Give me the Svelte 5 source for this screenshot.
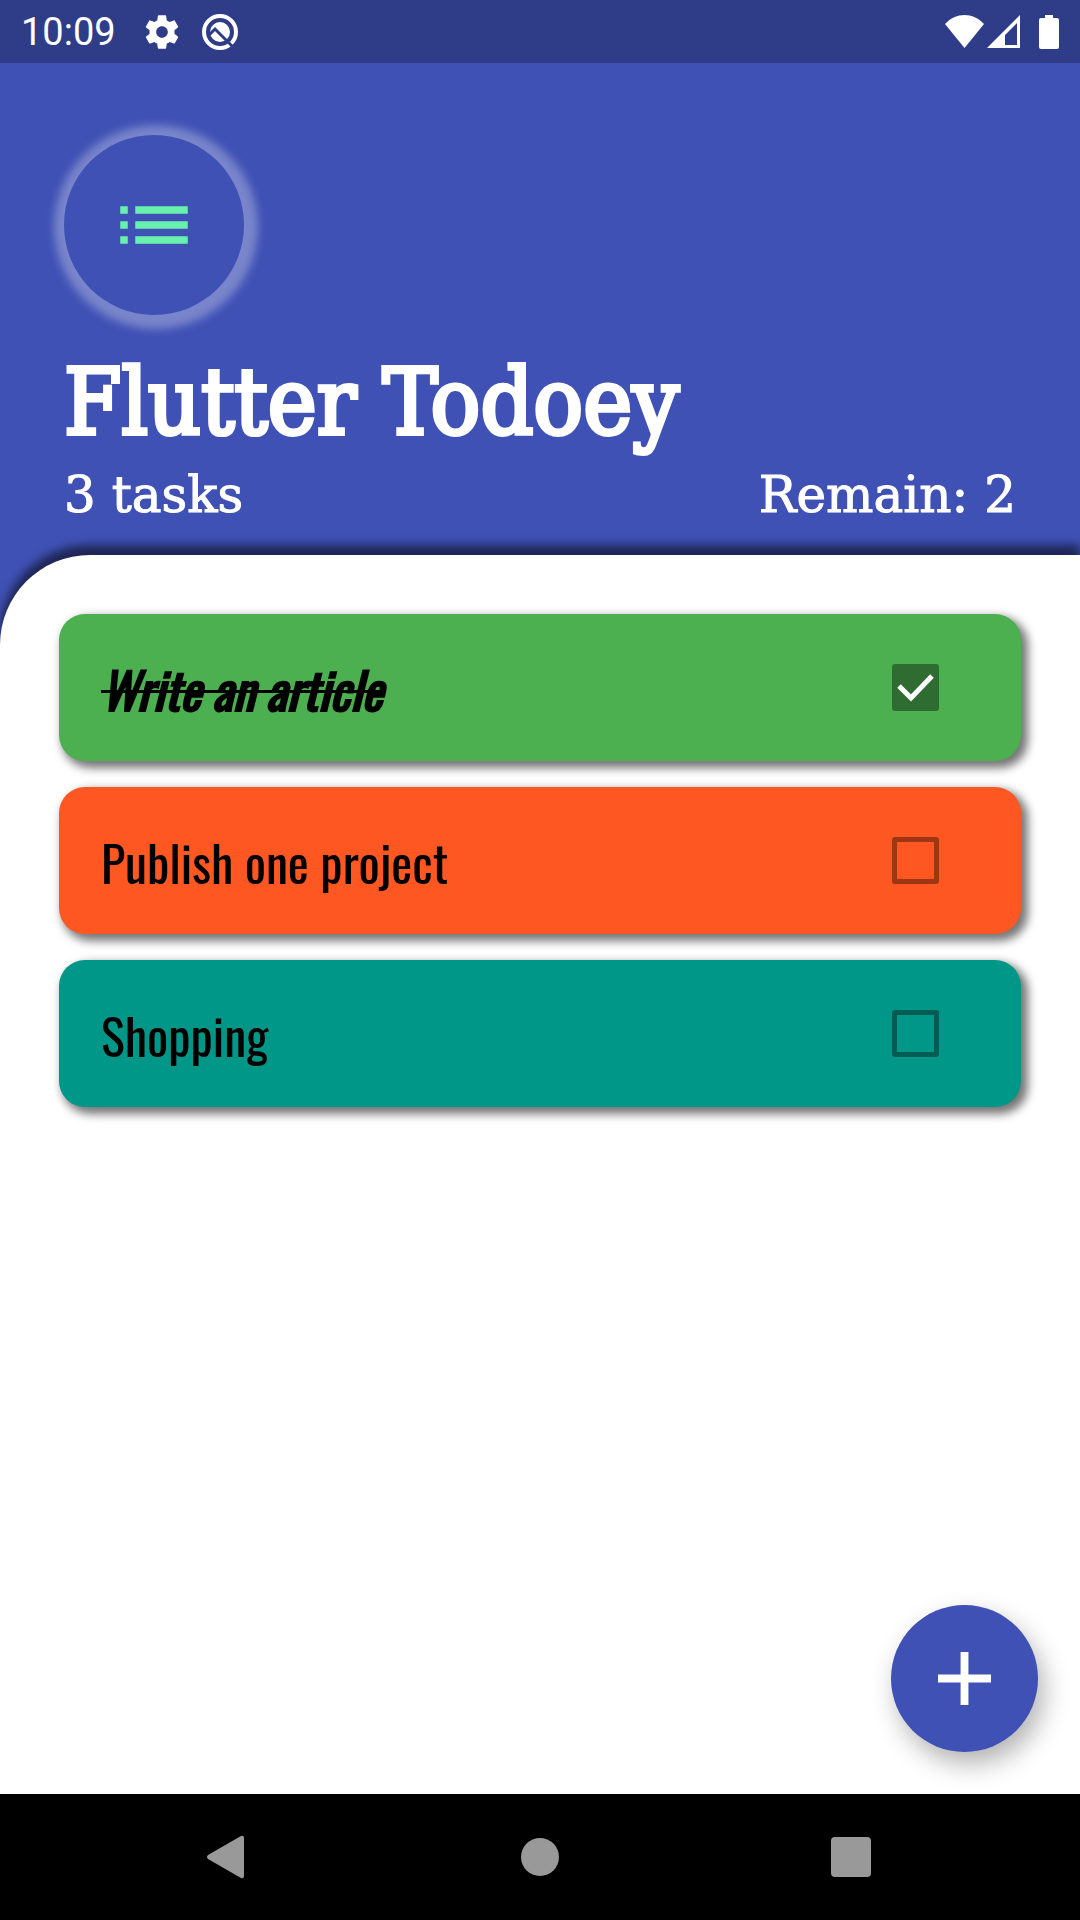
<script>
  let tasks = $state([
    { name: 'Write an article', tone: 'green', done: true },
    { name: 'Publish one project', tone: 'orange', done: false },
    { name: 'Shopping', tone: 'teal', done: false },
  ]);
  let remaining = $derived(tasks.filter((t) => !t.done).length);
</script>

<div class="screen">
  <div class="status">
    <div class="status-group left">
      <span class="time">10:09</span>
      <svg class="gear" viewBox="0 0 24 24" aria-hidden="true">
        <path d="M19.43 12.98c.04-.32.07-.64.07-.98s-.03-.66-.07-.98l2.11-1.65c.19-.15.24-.42.12-.64l-2-3.46c-.12-.22-.39-.3-.61-.22l-2.49 1c-.52-.4-1.08-.73-1.69-.98l-.38-2.65C14.46 2.18 14.25 2 14 2h-4c-.25 0-.46.18-.49.42l-.38 2.65c-.61.25-1.17.59-1.69.98l-2.49-1c-.23-.09-.49 0-.61.22l-2 3.46c-.13.22-.07.49.12.64l2.11 1.65c-.04.32-.07.65-.07.98s.03.66.07.98l-2.11 1.65c-.19.15-.24.42-.12.64l2 3.46c.12.22.39.3.61.22l2.49-1c.52.4 1.08.73 1.69.98l.38 2.65c.03.24.24.42.49.42h4c.25 0 .46-.18.49-.42l.38-2.65c.61-.25 1.17-.59 1.69-.98l2.49 1c.23.09.49 0 .61-.22l2-3.46c.12-.22.07-.49-.12-.64l-2.11-1.65zM12 15.5c-1.93 0-3.5-1.57-3.5-3.5s1.57-3.5 3.5-3.5 3.5 1.57 3.5 3.5-1.57 3.5-3.5 3.5z" />
      </svg>
      <svg class="badge" viewBox="0 0 36 36" aria-hidden="true">
        <circle class="ring" cx="18" cy="18" r="16" />
        <circle cx="18" cy="18" r="10" />
        <path class="cut" d="M7 21l6-6 17 17" />
      </svg>
    </div>
    <div class="status-group right">
      <svg class="wifi" viewBox="0 0 39 33" aria-hidden="true">
        <path d="M0 9C11-3 28-3 39 9L19.500 33z" />
      </svg>
      <svg class="signal" viewBox="0 0 33 33" aria-hidden="true">
        <path fill-rule="evenodd" d="M33 0v33H0zM30 8L18 20v10h12z" />
      </svg>
      <svg class="battery" viewBox="0 0 20 34" aria-hidden="true">
        <path d="M6 0h8v3h4q2 0 2 2v27q0 2-2 2H2q-2 0-2-2V5q0-2 2-2h4z" />
      </svg>
    </div>
  </div>

  <header>
    <div class="logo">
      <svg viewBox="0 0 24 24" aria-hidden="true">
        <path d="M3 13h2v-2H3v2zm0 4h2v-2H3v2zm0-8h2V7H3v2zm4 4h14v-2H7v2zm0 4h14v-2H7v2zM7 7v2h14V7H7z" />
      </svg>
    </div>
    <h1>Flutter Todoey</h1>
    <div class="summary">
      <span>{tasks.length} tasks</span>
      <span>Remain: {remaining}</span>
    </div>
  </header>

  <main>
    <ul>
      {#each tasks as task}
        <li>
          <label class="card {task.tone}" class:done={task.done}>
            <span class="name">{task.name}</span>
            <span class="box">
              <input type="checkbox" bind:checked={task.done} />
              <svg class="tick" viewBox="0 0 47 47" aria-hidden="true">
                <path d="M7 22l12 12 21-22" />
              </svg>
            </span>
          </label>
        </li>
      {/each}
    </ul>
    <button class="add" aria-label="Add task">
      <svg viewBox="0 0 54 54" aria-hidden="true"><path d="M23 0h8v23h23v8H31v23h-8V31H0v-8h23z" /></svg>
    </button>
  </main>

  <nav>
    <button aria-label="Back">
      <svg viewBox="0 0 44 44" aria-hidden="true"><path d="M34 1q3-1 3 2v38q0 3-3 2L1 24q-2-2 0-4z" /></svg>
    </button>
    <button aria-label="Home">
      <svg viewBox="0 0 44 44" aria-hidden="true"><circle cx="22" cy="22" r="19" /></svg>
    </button>
    <button aria-label="Recents">
      <svg viewBox="0 0 44 44" aria-hidden="true"><rect x="2" y="2" width="40" height="40" rx="4" /></svg>
    </button>
  </nav>
</div>

<style>
  :global(body) {
    margin: 0;
  }

  .screen {
    display: flex;
    flex-direction: column;
    min-height: 100vh;
    overflow: hidden;
    background: #3f51b5;
    color: #fff;
    font-family: Roboto, sans-serif;
  }

  svg {
    display: block;
    fill: currentColor;
  }

  button {
    display: grid;
    place-items: center;
    padding: 0;
    border: 0;
    background: none;
    color: inherit;
    cursor: pointer;
  }

  .status {
    display: flex;
    justify-content: space-between;
    align-items: center;
    height: 63px;
    padding: 0 21px;
    background: #2f3c87;
  }

  .status-group {
    display: flex;
    align-items: center;
  }

  .time {
    margin-right: 26px;
    font-size: 38px;
    line-height: 44px;
  }

  .gear {
    width: 40px;
    margin-right: 20px;
  }

  .badge {
    width: 36px;
  }

  .badge .ring {
    fill: none;
    stroke: #fff;
    stroke-width: 4;
  }

  .badge .cut {
    fill: none;
    stroke: #2f3c87;
    stroke-width: 3;
  }

  .wifi {
    width: 39px;
    margin-right: 3px;
  }

  .signal {
    width: 33px;
    margin-right: 19px;
  }

  .battery {
    width: 20px;
  }

  header {
    padding: 72px 64px 28px;
    font-family: 'Roboto Slab', 'DejaVu Serif', serif;
  }

  .logo {
    display: grid;
    place-items: center;
    width: 180px;
    height: 180px;
    border-radius: 50%;
    background: #3f51b5;
    box-shadow: 2px 2px 8px 12px rgba(255, 255, 255, 0.3);
    color: #69f0ae;
  }

  .logo svg {
    width: 90px;
  }

  h1 {
    margin: 28px 0 0;
    font-family: 'Roboto Slab', 'DejaVu Serif Condensed', 'DejaVu Serif', serif;
    font-size: 92px;
    font-weight: 400;
    line-height: 120px;
    white-space: nowrap;
    -webkit-text-stroke: 4px #fff;
  }

  .summary {
    display: flex;
    justify-content: space-between;
    font-size: 50px;
    line-height: 64px;
    -webkit-text-stroke: 1px #fff;
  }

  main {
    position: relative;
    flex: 1;
    padding: 59px 59px 200px;
    border-top-left-radius: 90px;
    background: #fff;
    box-shadow: 0 -10px 10px rgba(0, 0, 0, 0.54);
    color: #000;
  }

  ul {
    display: grid;
    gap: 26px;
    margin: 0;
    padding: 0;
    list-style: none;
  }

  .card {
    display: flex;
    justify-content: space-between;
    align-items: center;
    min-height: 147px;
    padding: 0 82px 0 42px;
    box-sizing: border-box;
    border-radius: 26px;
    box-shadow: 5px 5px 10px 2px rgba(0, 0, 0, 0.54);
    cursor: pointer;
  }

  .green {
    background: #4caf50;
  }

  .orange {
    background: #ff5722;
  }

  .teal {
    background: #009688;
  }

  .name {
    font-family: Oswald, 'Liberation Sans Narrow', sans-serif;
    font-size: 50px;
    line-height: 60px;
  }

  .done .name {
    font-style: italic;
    text-decoration: line-through;
    text-decoration-thickness: 3px;
    -webkit-text-stroke: 2px #000;
  }

  .box {
    display: grid;
  }

  .box > * {
    grid-area: 1 / 1;
  }

  input {
    appearance: none;
    width: 47px;
    height: 47px;
    margin: 0;
    border: 5px solid rgba(0, 0, 0, 0.38);
    border-radius: 3px;
  }

  input:checked {
    border: 0;
    background: rgba(0, 0, 0, 0.38);
  }

  .tick {
    width: 47px;
    fill: none;
    stroke: #fff;
    stroke-width: 5;
    visibility: hidden;
    pointer-events: none;
  }

  input:checked + .tick {
    visibility: visible;
  }

  .add {
    position: absolute;
    right: 42px;
    bottom: 42px;
    width: 147px;
    height: 147px;
    border-radius: 50%;
    background: #3f51b5;
    box-shadow: 6px 12px 26px rgba(0, 0, 0, 0.3);
    color: #fff;
  }

  .add svg {
    width: 53px;
  }

  nav {
    position: relative;
    display: grid;
    grid-template-columns: repeat(3, 1fr);
    height: 126px;
    padding: 0 73px;
    background: #000;
    color: #999;
  }

  nav svg {
    width: 44px;
  }
</style>
